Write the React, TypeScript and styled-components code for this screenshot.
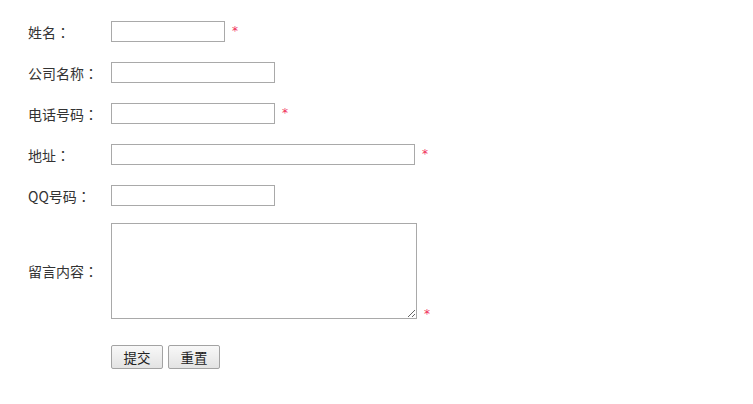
import React from "react";
import styled, {createGlobalStyle} from "styled-components";

const GlobalStyle = createGlobalStyle`
  html, body {
    margin: 0;
    padding: 0;
    background: #fff;
  }
  body {
    font-family: "Microsoft YaHei", "Noto Sans CJK SC", "Noto Sans", sans-serif;
    font-size: 14px;
    color: #333;
  }
`

type FieldType = {
  label: string,
  width: number,
  required?: boolean,
}

const fields: FieldType[] = [
  {label: '姓名', width: 114, required: true},
  {label: '公司名称', width: 164},
  {label: '电话号码', width: 164, required: true},
  {label: '地址', width: 304, required: true},
  {label: 'QQ号码', width: 164},
]

export default function App() {
  return (
    <>
      <GlobalStyle/>
      <Form onSubmit={e => e.preventDefault()}>
        {fields.map(f => (
          <Row key={f.label}>
            <Label>{f.label}<Colon>：</Colon></Label>
            <Cell>
              <Input type="text" $width={f.width}/>
              {f.required && <Star>*</Star>}
            </Cell>
          </Row>
        ))}
        <Row $tall>
          <Label>留言内容<Colon>：</Colon></Label>
          <Cell $bottom>
            <TextArea/>
            <Star $low>*</Star>
          </Cell>
        </Row>
        <ButtonRow>
          <span/>
          <Cell>
            <Button type="submit">提交</Button>
            <Button type="reset">重置</Button>
          </Cell>
        </ButtonRow>
      </Form>
    </>
  )
}

const Form = styled.form`
    display: flex;
    flex-direction: column;
    padding: 11px 0 0 28px;
`

const Row = styled.div<{ $tall?: boolean }>`
    display: grid;
    grid-template-columns: 83px auto;
    align-items: center;
    height: ${p => p.$tall ? 'auto' : '41px'};
    padding: ${p => p.$tall ? '7px 0 13px' : '0'};
`

const ButtonRow = styled(Row)`
    height: 50px;
`

const Label = styled.label`
    line-height: 20px;
    white-space: nowrap;
`

// centred full-width colon, as in the original font
const Colon = styled.span`
    font-family: "Noto Sans CJK TC", sans-serif;
`

const Cell = styled.div<{ $bottom?: boolean }>`
    display: flex;
    align-items: ${p => p.$bottom ? 'flex-end' : 'center'};
    gap: 5px;
`

const Input = styled.input<{ $width: number }>`
    box-sizing: border-box;
    width: ${p => p.$width}px;
    height: 21px;
    margin: 0;
    padding: 1px 3px;
    border: 1px solid #a9a9a9;
    font: inherit;
    font-size: 13px;
    outline: none;
`

const TextArea = styled.textarea`
    box-sizing: border-box;
    width: 306px;
    height: 96px;
    margin: 0;
    padding: 2px;
    border: 1px solid #a9a9a9;
    font: inherit;
    font-size: 13px;
    outline: none;
`

const Star = styled.span<{ $low?: boolean }>`
    color: #f0305a;
    font-size: 12px;
    font-family: "DejaVu Sans", sans-serif;
    margin-left: 2px;
    line-height: 12px;
    position: relative;
    top: ${p => p.$low ? '1px' : '-1px'};
`

const Button = styled.button`
    box-sizing: border-box;
    width: 52px;
    height: 24px;
    margin: 0;
    padding: 0;
    border: 1px solid #a3a3a3;
    border-radius: 2px;
    background: linear-gradient(#f8f8f8, #e3e3e3);
    font: inherit;
    font-size: 13.5px;
    color: #222;
    cursor: pointer;
`
